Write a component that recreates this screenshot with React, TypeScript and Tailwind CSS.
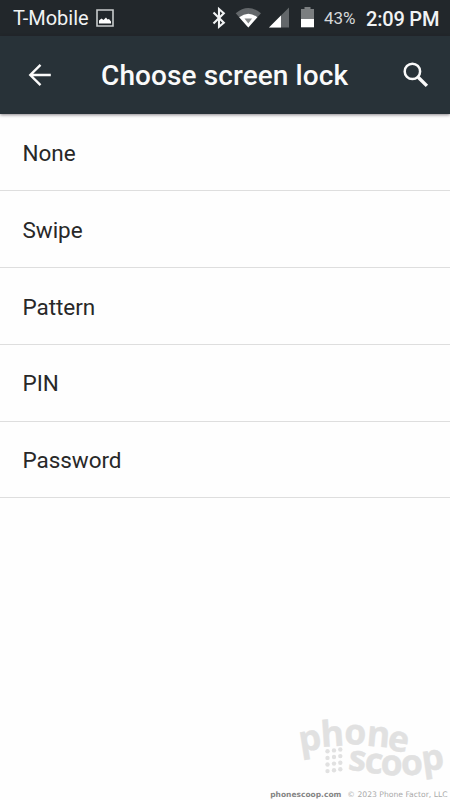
const options = ["None", "Swipe", "Pattern", "PIN", "Password"];

function StatusBar() {
  return (
    <div className="flex h-9 items-center bg-[#22272b] pl-[13px] text-[#f1f3f4]">
      <span className="w-[83px] whitespace-nowrap text-[20px] leading-9">T-Mobile</span>
      <svg className="h-[18px] w-[18px]" viewBox="0 0 18 18">
        <path d="M1 1h16v16H1z" fill="none" stroke="#c9cccd" strokeWidth="1.6" />
        <path d="M3 14.5v-3l2.5-2 2 1.5 2.5-2.5 1.5 2 1.5-.5 2 2.5v2z" fill="#fff" />
      </svg>
      <svg className="ml-[98px] h-9 w-[104px] shrink-0" viewBox="0 0 104 36">
        <path d="M1.5 12.5 11.8 22.7 7 26.8V9l4.8 4.3L1.5 23.6" fill="none" stroke="#f1f3f4" strokeWidth="2.1" />
        <path d="M23.7 13.2Q36.3 2.8 49 13.2L36.3 27.5z" fill="#63676a" />
        <path d="M27.2 17.2Q36.3 10.2 45.4 17.2L36.3 27.5z" fill="#fff" />
        <path d="M32.5 18.5h7.6l-3.8 5z" fill="#858889" />
        <path d="M77 7.5V27.5H57z" fill="#63676a" />
        <path d="M69 15.5v12H57z" fill="#fff" />
        <path d="M89 9h3.5V7h6v2h3.5v10H89z" fill="#7b7e80" />
        <path d="M89 19h13v8.3H89z" fill="#fff" />
      </svg>
      <span className="ml-[8px] w-[42px] whitespace-nowrap text-[17px] leading-9 text-[#d5d8d9]">43%</span>
      <span className="whitespace-nowrap pt-px text-[20px] font-medium leading-9 tracking-[-0.2px]">2:09 PM</span>
    </div>
  );
}

function Header() {
  return (
    <header className="relative flex h-[78px] items-center bg-[#283238] text-[#fafafa] shadow-[0_1px_3px_rgba(30,20,30,0.5)]">
      <svg className="ml-[28px] h-6 w-6" viewBox="0 0 24 24" fill="none" stroke="currentColor" strokeWidth="2.4">
        <path d="M22.8 12H2.5M12.5 1.8 2.3 12l10.2 10.2" />
      </svg>
      <h1 className="ml-[49px] w-[302px] whitespace-nowrap pt-[2px] text-[28px] font-medium leading-[78px] tracking-[0.1px]">Choose screen lock</h1>
      <svg className="h-[26px] w-[26px]" viewBox="0 0 26 26" fill="none" stroke="currentColor">
        <circle cx="9.4" cy="9.4" r="7.7" strokeWidth="2.5" />
        <path d="m15.2 15.2 8.7 8.7" strokeWidth="3.4" />
      </svg>
    </header>
  );
}

function Watermark() {
  return (
    <footer className="flex flex-col items-end pr-[2.5px]">
      <svg className="h-[75px] w-[151px] overflow-visible" viewBox="296 714 151 75" role="img" aria-label="phone scoop">
        <g fill="#e1e1e1" stroke="#e1e1e1" strokeWidth="0.4" fontFamily="'Open Sans', sans-serif" fontWeight="700" fontSize="35.5">
          <text x="299.5 320.5 343 365 385.5" y="752 747 744 745.5 749.5" rotate="-9 -4 2 5 9">phone</text>
          <text x="346.5 363 379.5 400.5 422" y="769.5 772.5 775 775.5 771.5" rotate="7 5 1 -3 -8">scoop</text>
        </g>
        <g fill="#e1e1e1">
          {[326.5, 333, 339.3].map((x, column) =>
            [751.3, 757.9, 764.5, 771.1].map((y) => (
              <circle key={`${x}-${y}`} cx={x} cy={y - column * 0.9} r="2.2" />
            )),
          )}
        </g>
      </svg>
      <p className="flex h-[11px] items-center whitespace-nowrap font-['DejaVu_Sans',sans-serif] text-[7.65px] leading-[11px] text-[#aaa]">
        <span className="mr-[6px] text-[7.5px] font-bold text-[#858585]">phonescoop.com</span>
        <span>© 2023 Phone Factor, LLC</span>
      </p>
    </footer>
  );
}

export default function App() {
  return (
    <main className="flex h-[800px] w-[450px] flex-col overflow-hidden bg-[#fefefe] font-['Roboto',sans-serif]">
      <StatusBar />
      <Header />
      <ul className="flex-1">
        {options.map((option) => (
          <li key={option} className="flex h-[76.9px] items-center border-b border-[#dedede] pl-[22.5px] pt-[3.4px] text-[22.5px] tracking-[-0.05px] text-[#282828]">
            {option}
          </li>
        ))}
      </ul>
      <Watermark />
    </main>
  );
}
